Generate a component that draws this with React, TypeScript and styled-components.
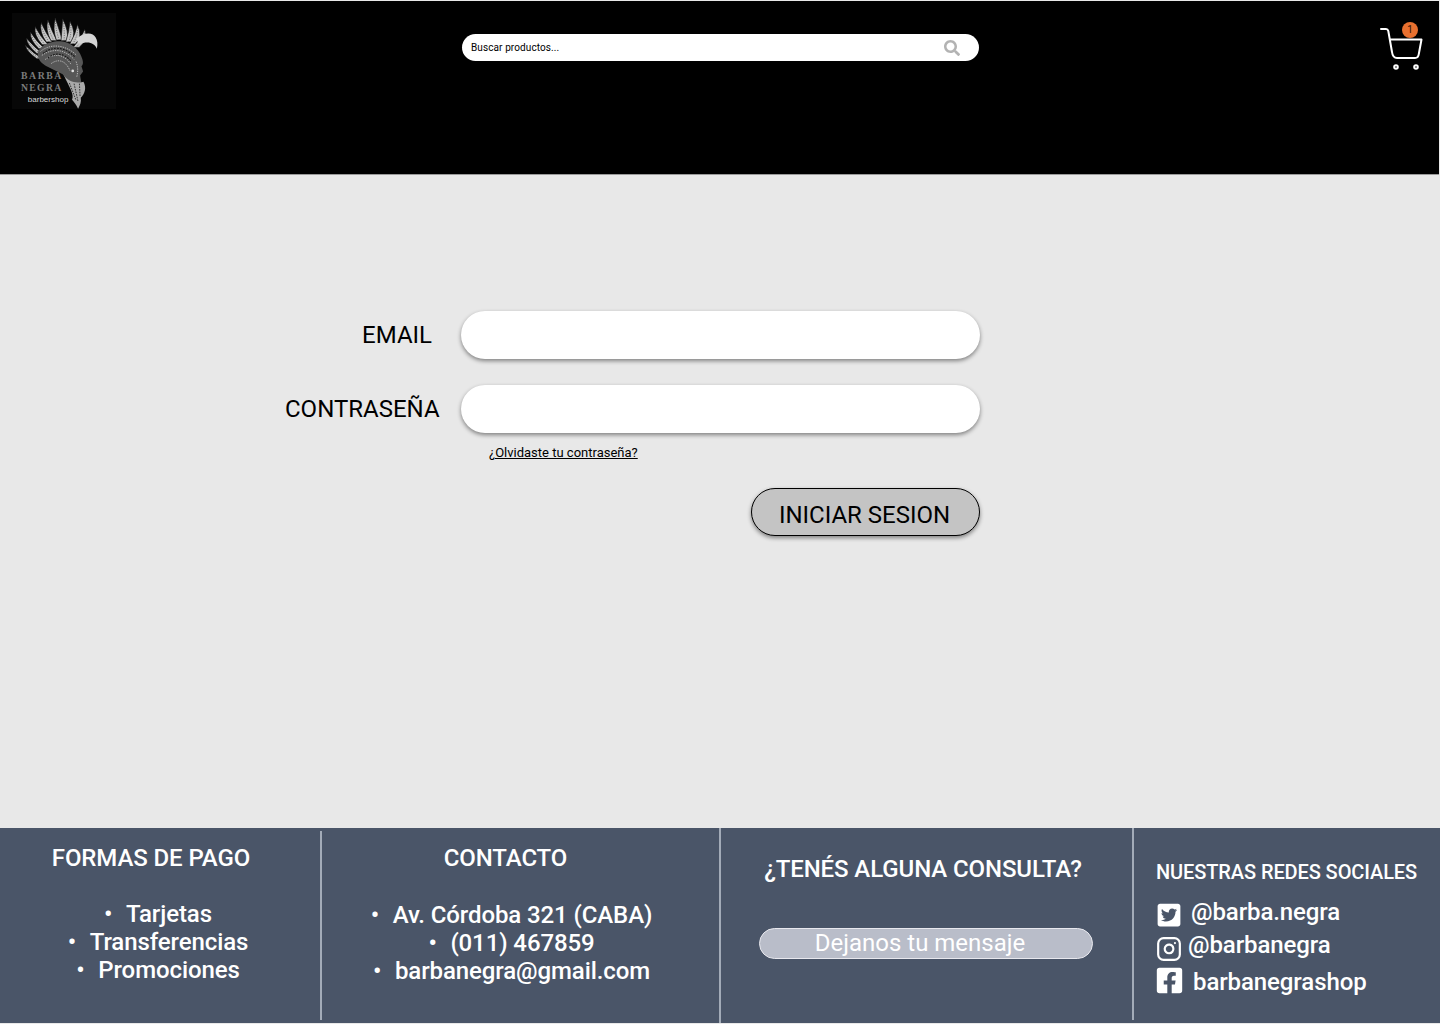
import React from 'react';
import styled, { createGlobalStyle } from 'styled-components';
import { FaFacebookSquare, FaSearch, FaTwitterSquare } from 'react-icons/fa';
import { FiInstagram } from 'react-icons/fi';

const GlobalStyle = createGlobalStyle`
  html, body {
    margin: 0;
    padding: 0;
    background: #e8e8e8;
  }
  * {
    box-sizing: border-box;
  }
  body {
    font-family: Roboto, "Liberation Sans", sans-serif;
  }
`;

const Page = styled.div`
  width: 1440px;
  height: 1024px;
  display: flex;
  flex-direction: column;
  overflow: hidden;
`;

const Header = styled.header`
  width: 1439px;
  height: 174px;
  margin-top: 1px;
  flex: none;
  display: flex;
  align-items: flex-start;
  background: #000;
  border-bottom: 1px solid #9a9a9a;
  padding: 12px 11px 0 12px;
`;

const LogoMark = styled.svg`
  width: 104px;
  height: 96px;
  flex: none;
  background: #070707;
`;

const SearchBar = styled.form`
  width: 517px;
  height: 27px;
  margin: 21px 0 0 346px;
  display: flex;
  align-items: center;
  background: #fff;
  border-radius: 14px;
  padding: 0 19px 0 9px;
`;

const SearchInput = styled.input`
  flex: 1;
  min-width: 0;
  border: 0;
  outline: 0;
  padding: 0;
  background: transparent;
  font-family: inherit;
  font-size: 10px;
  letter-spacing: 0.1px;
  color: #000;

  &::placeholder {
    color: #000;
    opacity: 1;
  }
`;

const SearchButton = styled.button`
  display: flex;
  border: 0;
  padding: 0;
  background: none;
  color: #b3b3b3;
  font-size: 16px;
`;

const CartLink = styled.a`
  position: relative;
  display: block;
  width: 48px;
  height: 48px;
  margin: 10px 0 0 auto;
`;

const CartBadge = styled.span`
  position: absolute;
  left: 22px;
  top: -1px;
  width: 16px;
  height: 16px;
  border-radius: 50%;
  background: #e8702f;
  color: #2a1206;
  font-size: 10px;
  line-height: 16px;
  text-align: center;
`;

const Main = styled.main`
  flex: 1;
  padding: 136px 0 0 285px;
`;

const LoginForm = styled.form`
  width: 695px;
  display: flex;
  flex-direction: column;
`;

const FieldRow = styled.div<{ $gap?: number }>`
  display: grid;
  grid-template-columns: 176px 519px;
  align-items: center;
  margin-top: ${(p) => p.$gap ?? 0}px;
`;

const FieldLabel = styled.label<{ $inset: number }>`
  text-align: right;
  padding-right: ${(p) => p.$inset}px;
  font-size: 24px;
  color: #000;
  white-space: nowrap;
`;

const FieldInput = styled.input`
  height: 48px;
  width: 100%;
  border: 0;
  outline: 0;
  border-radius: 24px;
  background: #fff;
  padding: 0 24px;
  font-size: 20px;
  box-shadow: 0 2px 4px rgba(0, 0, 0, 0.45);
`;

const ForgotLink = styled.a`
  align-self: flex-start;
  margin: 12px 0 0 204px;
  font-size: 13px;
  line-height: 16px;
  color: #000;
  text-decoration: underline;
`;

const SubmitButton = styled.button`
  align-self: flex-end;
  width: 229px;
  height: 48px;
  margin-top: 27px;
  padding: 6px 2px 0 0;
  border: 1px solid #000;
  border-radius: 24px;
  background: #c4c4c4;
  font-family: inherit;
  font-size: 24px;
  color: #000;
  box-shadow: 0 2px 4px rgba(0, 0, 0, 0.45);
`;

const Footer = styled.footer`
  height: 195px;
  margin-bottom: 1px;
  flex: none;
  display: flex;
  background: #4a5568;
  color: #fff;
`;

const Divider = styled.div<{ $top: number; $bottom: number }>`
  width: 2px;
  flex: none;
  margin: ${(p) => p.$top}px 0 ${(p) => p.$bottom}px;
  background: #a3abb8;
`;

const ListColumn = styled.section<{ $width: number; $headShift: number }>`
  width: ${(p) => p.$width}px;
  flex: none;
  padding-top: 15px;

  h2 {
    padding-right: ${(p) => p.$headShift}px;
  }
`;

const ColumnTitle = styled.h2`
  margin: 0;
  font-size: 24px;
  line-height: 30px;
  font-weight: 500;
  letter-spacing: -0.1px;
  text-align: center;
`;

const InfoList = styled.ul<{ $shift: number; $top: number }>`
  list-style: none;
  margin: ${(p) => p.$top}px 0 0;
  padding: 0 ${(p) => p.$shift}px 0 0;
  text-align: center;
`;

const InfoItem = styled.li`
  font-size: 24px;
  line-height: 28px;
  font-weight: 500;
  letter-spacing: -0.1px;
  white-space: nowrap;

  &::before {
    content: '•';
    display: inline-block;
    width: 22px;
    text-align: left;
  }
`;

const ContactColumn = styled.section`
  width: 411px;
  flex: none;
  padding: 26px 0 0 38px;

  h2 {
    margin-left: -2px;
    width: 332px;
    white-space: nowrap;
  }
`;

const MessageButton = styled.button`
  display: block;
  width: 334px;
  height: 31px;
  margin-top: 44px;
  padding: 0 12px 6px 0;
  border: 1px solid #e8e8ee;
  border-radius: 16px;
  background: #b9bdc9;
  color: #fff;
  font-family: inherit;
  font-size: 24px;
  line-height: 28px;
`;

const SocialColumn = styled.section`
  flex: 1;
  padding: 30px 0 0 22px;
`;

const SocialTitle = styled.h2`
  margin: 0 0 13px;
  font-size: 20px;
  line-height: 28px;
  font-weight: 500;
  letter-spacing: -0.1px;
  white-space: nowrap;
`;

const SocialRow = styled.div<{ $gap: number; $top: number; $left?: number }>`
  display: flex;
  align-items: center;
  gap: ${(p) => p.$gap}px;
  height: 26px;
  margin-top: ${(p) => p.$top}px;
  margin-left: ${(p) => p.$left ?? 0}px;
  font-size: 24px;
  font-weight: 500;
  letter-spacing: -0.1px;
  white-space: nowrap;
`;

const SocialIcon = styled.span<{ $drop: number }>`
  display: flex;
  margin-top: ${(p) => Math.max(p.$drop, 0) * 2}px;
  margin-bottom: ${(p) => Math.max(-p.$drop, 0) * 2}px;
`;

// [tipX, tipY, baseX, baseY, curve] in the logo's own coordinates
const feathers = [
  [75, 136, 118, 176, -9],
  [78, 114, 118, 160, -10],
  [90, 96, 124, 146, -11],
  [104, 80, 134, 134, -11],
  [122, 68, 146, 126, -10],
  [142, 60, 160, 122, -9],
  [164, 55, 176, 120, -6],
  [186, 57, 190, 122, 5],
  [208, 64, 204, 126, 9],
  [230, 74, 216, 132, 11],
  [252, 88, 226, 142, 12],
];

const featherPath = ([tx, ty, bx, by, c]: number[]) => {
  const mx = (tx + bx) / 2;
  const my = (ty + by) / 2;
  return `M${bx - 9} ${by} Q${mx + c - 9} ${my - 2} ${tx} ${ty} Q${mx + c + 13} ${my + 5} ${bx + 9} ${by}Z`;
};

const App: React.FC = () => {
  return (
    <Page>
      <GlobalStyle />
      <Header>
        <LogoMark viewBox="35 40 310 285" role="img" aria-label="Barba Negra barbershop">
          {feathers.map((f) => (
            <g key={f[0]}>
              <path d={featherPath(f)} fill="#c4c4c4" stroke="#0c0c0c" strokeWidth="2" />
              <path
                d={`M${f[2]} ${f[3]} Q${(f[0] + f[2]) / 2 + f[4]} ${(f[1] + f[3]) / 2} ${f[0]} ${f[1]}`}
                fill="none"
                stroke="#3a3a3a"
                strokeWidth="2"
                strokeDasharray="3 4"
              />
            </g>
          ))}
          <path d="M226 116 C250 96 276 96 284 112 C290 122 291 132 288 146 C280 128 264 122 234 132Z" fill="#d5d5d5" />
          <path
            d="M112 166 C108 142 144 122 180 124 C208 126 234 146 242 170 C248 184 248 194 242 198 L247 214 L238 226 L242 248 C232 256 218 254 206 248 L186 222 L138 198 C124 190 114 180 112 166Z"
            fill="#575757"
          />
          <path
            d="M120 154 C148 130 194 132 228 166 M124 166 C154 144 192 146 220 178 M134 178 C162 158 192 162 212 194 M152 190 C174 174 196 182 208 212 M226 184 C232 200 232 214 228 230"
            fill="none"
            stroke="#c8c8c8"
            strokeWidth="2.5"
            strokeDasharray="4 3"
          />
          <path d="M128 160 C154 138 192 138 224 172 M142 174 C166 154 192 160 212 184" fill="none" stroke="#111" strokeWidth="3" strokeDasharray="5 4" />
          <circle cx="216" cy="212" r="4" fill="#e2e2e2" />
          <path
            d="M190 226 C204 246 228 250 248 244 C258 262 252 280 240 292 C242 304 238 314 232 325 C226 312 220 304 214 298 C222 282 204 258 190 226Z"
            fill="#aaaaaa"
          />
          <path d="M206 248 L226 300 M220 250 L232 304 M236 250 L238 290" stroke="#222" strokeWidth="2.5" strokeDasharray="5 3" fill="none" />
          <text x="62" y="235" fontFamily="Liberation Serif, serif" fontWeight="700" fontSize="29" textLength="120" fill="#7c7c7c">
            BARBA
          </text>
          <text x="62" y="272" fontFamily="Liberation Serif, serif" fontWeight="700" fontSize="29" textLength="120" fill="#7c7c7c">
            NEGRA
          </text>
          <text x="82" y="305" fontFamily="Liberation Sans, sans-serif" fontSize="24" fill="#d8d8d8">
            barbershop
          </text>
        </LogoMark>

        <SearchBar>
          <SearchInput placeholder="Buscar productos..." />
          <SearchButton type="button" aria-label="Buscar">
            <FaSearch />
          </SearchButton>
        </SearchBar>

        <CartLink href="#" aria-label="Carrito">
          <svg width="48" height="48" viewBox="0 0 48 48" fill="none" stroke="#fff" strokeWidth="2" strokeLinecap="round" strokeLinejoin="round">
            <path d="M1 6 H6 C7.5 6 8 6.8 8.3 8 L12 29 C12.5 33 14 35 17 35 H35 C37.5 35 38.5 33.5 38.8 31 L41.5 16.5 H10" />
            <circle cx="16" cy="44" r="1.8" />
            <circle cx="36" cy="44" r="1.8" />
          </svg>
          <CartBadge>1</CartBadge>
        </CartLink>
      </Header>

      <Main>
        <LoginForm>
          <FieldRow>
            <FieldLabel htmlFor="email" $inset={29}>
              EMAIL
            </FieldLabel>
            <FieldInput id="email" type="email" />
          </FieldRow>
          <FieldRow $gap={26}>
            <FieldLabel htmlFor="password" $inset={22}>
              CONTRASEÑA
            </FieldLabel>
            <FieldInput id="password" type="password" />
          </FieldRow>
          <ForgotLink href="#">¿Olvidaste tu contraseña?</ForgotLink>
          <SubmitButton type="button">INICIAR SESION</SubmitButton>
        </LoginForm>
      </Main>

      <Footer>
        <ListColumn $width={320} $headShift={18}>
          <ColumnTitle>FORMAS DE PAGO</ColumnTitle>
          <InfoList $shift={4} $top={27}>
            <InfoItem>Tarjetas</InfoItem>
            <InfoItem>Transferencias</InfoItem>
            <InfoItem>Promociones</InfoItem>
          </InfoList>
        </ListColumn>
        <Divider $top={3} $bottom={3} />
        <ListColumn $width={397} $headShift={30}>
          <ColumnTitle>CONTACTO</ColumnTitle>
          <InfoList $shift={18} $top={28}>
            <InfoItem>Av. Córdoba 321 (CABA)</InfoItem>
            <InfoItem>(011) 467859</InfoItem>
            <InfoItem>barbanegra@gmail.com</InfoItem>
          </InfoList>
        </ListColumn>
        <Divider $top={0} $bottom={0} />
        <ContactColumn>
          <ColumnTitle>¿TENÉS ALGUNA CONSULTA?</ColumnTitle>
          <MessageButton type="button">Dejanos tu mensaje</MessageButton>
        </ContactColumn>
        <Divider $top={0} $bottom={3} />
        <SocialColumn>
          <SocialTitle>NUESTRAS REDES SOCIALES</SocialTitle>
          <SocialRow $gap={9} $top={0}>
            <SocialIcon $drop={3}>
              <FaTwitterSquare size={26} />
            </SocialIcon>
            <span>@barba.negra</span>
          </SocialRow>
          <SocialRow $gap={6} $top={7}>
            <SocialIcon $drop={4}>
              <FiInstagram size={26} />
            </SocialIcon>
            <span>@barbanegra</span>
          </SocialRow>
          <SocialRow $gap={9} $top={11} $left={-1}>
            <SocialIcon $drop={-2}>
              <FaFacebookSquare size={29} />
            </SocialIcon>
            <span>barbanegrashop</span>
          </SocialRow>
        </SocialColumn>
      </Footer>
    </Page>
  );
};

export default App;
